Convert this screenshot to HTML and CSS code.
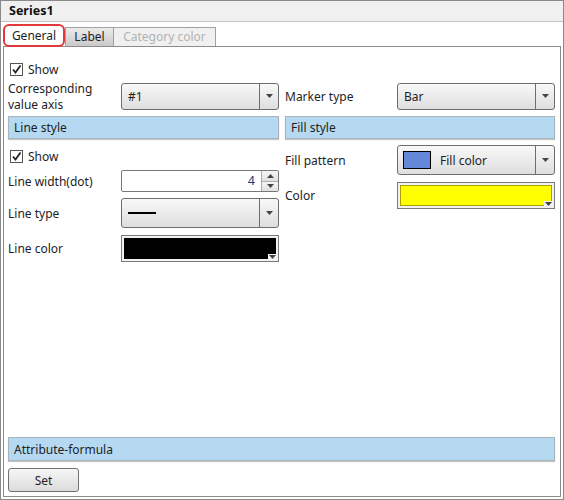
FILE: index.html
```html
<!DOCTYPE html>
<html lang="en">
<head>
  <meta charset="UTF-8" />
  <title>Series1</title>
  <link rel="stylesheet" href="styles.css">
</head>
<body>
  <div class="window">
    <div class="titlebar">Series1</div>

    <div class="tabs">
      <div class="tab active">General</div>
      <div class="tab label-tab">Label</div>
      <div class="tab disabled">Category color</div>
    </div>

    <div class="panel">
      <div class="check top-check">
        <span class="box"><svg width="11" height="11" viewBox="0 0 11 11"><path d="M2 5.5 L4.5 8.5 L9.5 1.5" fill="none" stroke="#222" stroke-width="1.8"/></svg></span>
        Show
      </div>

      <div class="columns">
        <div class="field first-row">
          <div class="label two-line">Corresponding<br>value axis</div>
          <div class="combo tall27">
            <div class="combo-text">#1</div>
            <div class="combo-arrow"><svg width="7" height="4" viewBox="0 0 7 4"><polygon points="0,0 7,0 3.5,4" fill="#444"/></svg></div>
          </div>
        </div>
        <div class="field first-row">
          <div class="label">Marker type</div>
          <div class="combo tall27">
            <div class="combo-text">Bar</div>
            <div class="combo-arrow"><svg width="7" height="4" viewBox="0 0 7 4"><polygon points="0,0 7,0 3.5,4" fill="#444"/></svg></div>
          </div>
        </div>

        <div class="section">Line style</div>
        <div class="section">Fill style</div>

        <div class="stack left-stack">
          <div class="check sub-check">
            <span class="box"><svg width="11" height="11" viewBox="0 0 11 11"><path d="M2 5.5 L4.5 8.5 L9.5 1.5" fill="none" stroke="#222" stroke-width="1.8"/></svg></span>
            Show
          </div>
          <div class="field">
            <div class="label">Line width(dot)</div>
            <div class="spin">
              <div class="spin-value">4</div>
              <div class="spin-buttons">
                <div class="spin-btn"><svg width="7" height="4" viewBox="0 0 7 4"><polygon points="0,4 7,4 3.5,0" fill="#444"/></svg></div>
                <div class="spin-btn"><svg width="7" height="4" viewBox="0 0 7 4"><polygon points="0,0 7,0 3.5,4" fill="#444"/></svg></div>
              </div>
            </div>
          </div>
          <div class="field">
            <div class="label">Line type</div>
            <div class="combo tall30">
              <div class="combo-text"><span class="line-sample"></span></div>
              <div class="combo-arrow"><svg width="7" height="4" viewBox="0 0 7 4"><polygon points="0,0 7,0 3.5,4" fill="#444"/></svg></div>
            </div>
          </div>
          <div class="field line-color">
            <div class="label">Line color</div>
            <div class="color-box tall27">
              <div class="swatch black"></div>
              <div class="notch"><svg width="7" height="4" viewBox="0 0 7 4"><polygon points="0,0 7,0 3.5,4" fill="#444"/></svg></div>
            </div>
          </div>
        </div>

        <div class="stack right-stack">
          <div class="field">
            <div class="label">Fill pattern</div>
            <div class="combo tall30">
              <div class="combo-text"><span class="pattern"></span>Fill color</div>
              <div class="combo-arrow"><svg width="7" height="4" viewBox="0 0 7 4"><polygon points="0,0 7,0 3.5,4" fill="#444"/></svg></div>
            </div>
          </div>
          <div class="field">
            <div class="label">Color</div>
            <div class="color-box tall27">
              <div class="swatch yellow"></div>
              <div class="notch"><svg width="7" height="4" viewBox="0 0 7 4"><polygon points="0,0 7,0 3.5,4" fill="#444"/></svg></div>
            </div>
          </div>
        </div>
      </div>

      <div class="bottom">
        <div class="section">Attribute-formula</div>
        <button class="set-button">Set</button>
      </div>
    </div>
  </div>
</body>
</html>
```

FILE: styles.css
```css
body {
  margin: 0;
  font-family: 'Noto Sans', 'DejaVu Sans', sans-serif;
  font-size: 12px;
  color: #1e1e1e;
}

.window {
  width: 564px;
  height: 500px;
  box-sizing: border-box;
  border: 1px solid #8a8a8a;
  background: #ffffff;
  display: flex;
  flex-direction: column;
}

.titlebar {
  height: 20px;
  line-height: 20px;
  padding-left: 8px;
  background: #f0f0f0;
  border-bottom: 1px solid #c4c4c4;
  font-weight: bold;
  font-size: 12.5px;
  color: #111;
}

.tabs {
  display: flex;
  align-items: flex-end;
  height: 21px;
  margin-top: 3px;
  padding-left: 2px;
  position: relative;
  z-index: 1;
}

.tab {
  height: 18px;
  line-height: 18px;
  box-sizing: content-box;
  border: 1px solid #a0a0a0;
  border-bottom: none;
  background: linear-gradient(#ececec, #c9c9c9);
  color: #1e1e1e;
  text-align: center;
}

.tab.active {
  height: 19px;
  line-height: 19px;
  width: 58px;
  margin-bottom: -1px;
  background: #ffffff;
  border: 2px solid #e23a3a;
  border-radius: 6px;
}

.tab.label-tab {
  width: 47px;
}

.tab.disabled {
  width: 101px;
  background: #f0f0f0;
  color: #b2b2b2;
  border-left: none;
}

.panel {
  height: 451px;
  box-sizing: border-box;
  margin: 0 2px;
  border: 1px solid #8c8c8c;
  padding: 15px 5px 4px 4px;
  display: flex;
  flex-direction: column;
}

.check {
  display: flex;
  align-items: center;
  height: 14px;
  padding-left: 2px;
}

.box {
  width: 11px;
  height: 11px;
  border: 1px solid #555;
  background: #fff;
  margin-right: 5px;
  display: flex;
}

.columns {
  display: grid;
  grid-template-columns: 271px 270px;
  column-gap: 6px;
  row-gap: 6px;
  margin-top: 6px;
  align-items: start;
}

.field {
  display: flex;
  align-items: center;
}

.first-row {
  height: 28px;
}

.label {
  width: 113px;
  flex: none;
  line-height: 15px;
}

.two-line {
  line-height: 16px;
  margin-top: 1px;
}

.columns > .field:nth-child(2) .label,
.right-stack .label {
  width: 112px;
}

.combo, .spin, .color-box {
  width: 158px;
  box-sizing: border-box;
  flex: none;
}

.tall27 { height: 27px; }
.tall30 { height: 30px; }

.combo {
  display: flex;
  border: 1px solid #6e6e6e;
  border-radius: 3px;
  background: linear-gradient(#f8f8f8, #dedede);
}

.combo-text {
  flex: 1;
  display: flex;
  align-items: center;
  padding-left: 6px;
}

.combo-arrow {
  width: 18px;
  border-left: 1px solid #6e6e6e;
  display: flex;
  align-items: center;
  justify-content: center;
}

.line-sample {
  display: block;
  width: 28px;
  height: 2px;
  background: #000;
}

.pattern {
  width: 26px;
  height: 16px;
  border: 1px solid #000;
  background: #6487d8;
  margin: 0 9px 0 -1px;
}

.section {
  height: 23px;
  line-height: 22px;
  box-sizing: border-box;
  padding-left: 5px;
  background: #b5d9f1;
  border: 1px solid #a8b4bc;
  box-shadow: 0 1px 1px rgba(0, 0, 0, 0.22);
}

.stack {
  display: flex;
  flex-direction: column;
}

.left-stack {
  gap: 6px;
}

.right-stack {
  gap: 7px;
}

.sub-check {
  margin-top: 4px;
  margin-bottom: 1px;
}

.line-color {
  margin-top: 1px;
}

.spin {
  height: 22px;
  display: flex;
  border: 1px solid #777;
  border-radius: 2px;
  background: #fff;
}

.spin-value {
  flex: 1;
  text-align: right;
  line-height: 20px;
  padding-right: 6px;
  color: #1c3c78;
  font-size: 12.5px;
}

.spin-buttons {
  width: 16px;
  display: flex;
  flex-direction: column;
  border-left: 1px solid #aaa;
}

.spin-btn {
  flex: 1;
  display: flex;
  align-items: center;
  justify-content: center;
  background: linear-gradient(#f6f6f6, #e0e0e0);
}

.spin-btn + .spin-btn {
  border-top: 1px solid #aaa;
}

.color-box {
  position: relative;
  border: 1px solid #7a7a7a;
  padding: 2px;
  background: #f2f2f2;
}

.swatch {
  height: 100%;
  box-sizing: border-box;
}

.swatch.black {
  background: #000;
  border: 1px solid #000;
}

.swatch.yellow {
  background: #ffff00;
  border: 1px solid #a8a000;
}

.notch {
  position: absolute;
  right: 1px;
  bottom: 1px;
  width: 9px;
  height: 6px;
  background: #f2f2f2;
  display: flex;
  align-items: flex-end;
  justify-content: center;
  padding-bottom: 1px;
  box-sizing: border-box;
}

.bottom {
  margin-top: auto;
  display: flex;
  flex-direction: column;
  gap: 7px;
}

.bottom .section {
  height: 24px;
  line-height: 23px;
}

.set-button {
  width: 71px;
  height: 24px;
  border: 1px solid #707070;
  border-radius: 3px;
  background: linear-gradient(#f6f6f6, #dcdcdc);
  font-family: inherit;
  font-size: 12px;
  color: #1e1e1e;
  padding: 0;
}
```
